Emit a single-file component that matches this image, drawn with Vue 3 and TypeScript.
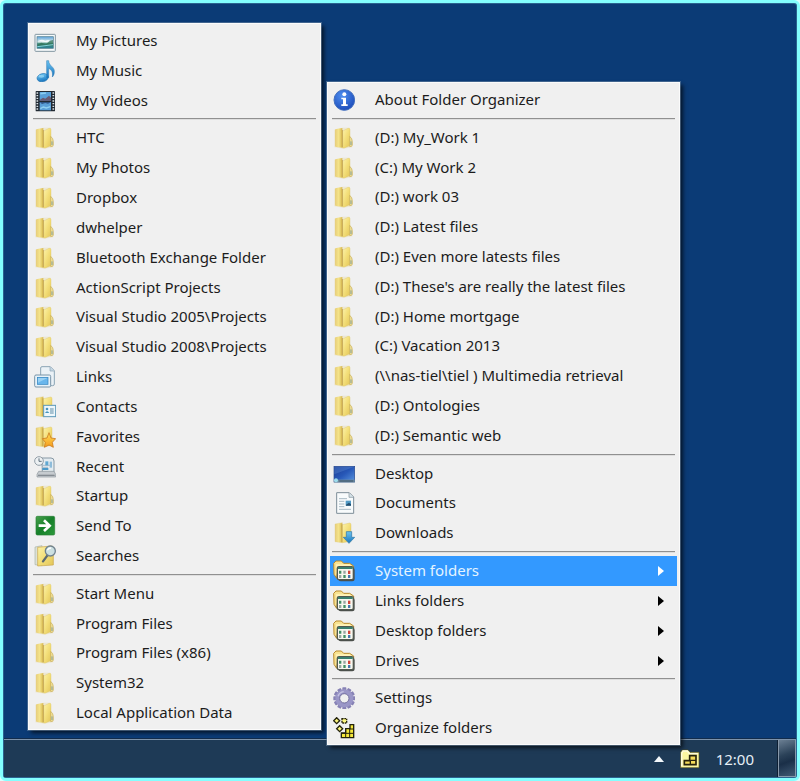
<script setup lang="ts">
interface MenuEntry {
  label: string
  icon: string
  submenu?: boolean
  active?: boolean
}

const folder = (label: string): MenuEntry => ({ label, icon: 'folder' })
const group = (label: string, active = false): MenuEntry => ({ label, icon: 'group', submenu: true, active })

const systemGroups: MenuEntry[][] = [
  [
    { label: 'My Pictures', icon: 'pictures' },
    { label: 'My Music', icon: 'music' },
    { label: 'My Videos', icon: 'videos' },
  ],
  [
    folder('HTC'),
    folder('My Photos'),
    folder('Dropbox'),
    folder('dwhelper'),
    folder('Bluetooth Exchange Folder'),
    folder('ActionScript Projects'),
    folder('Visual Studio 2005\\Projects'),
    folder('Visual Studio 2008\\Projects'),
    { label: 'Links', icon: 'links' },
    { label: 'Contacts', icon: 'contacts' },
    { label: 'Favorites', icon: 'favorites' },
    { label: 'Recent', icon: 'recent' },
    folder('Startup'),
    { label: 'Send To', icon: 'sendto' },
    { label: 'Searches', icon: 'searches' },
  ],
  [
    folder('Start Menu'),
    folder('Program Files'),
    folder('Program Files (x86)'),
    folder('System32'),
    folder('Local Application Data'),
  ],
]

const mainGroups: MenuEntry[][] = [
  [{ label: 'About Folder Organizer', icon: 'about' }],
  [
    folder('(D:) My_Work 1'),
    folder('(C:) My Work 2'),
    folder('(D:) work 03'),
    folder('(D:) Latest files'),
    folder('(D:) Even more latests files'),
    folder("(D:) These's are really the latest files"),
    folder('(D:) Home mortgage'),
    folder('(C:) Vacation 2013'),
    folder('(\\\\nas-tiel\\tiel ) Multimedia retrieval'),
    folder('(D:) Ontologies'),
    folder('(D:) Semantic web'),
  ],
  [
    { label: 'Desktop', icon: 'desktop' },
    { label: 'Documents', icon: 'documents' },
    { label: 'Downloads', icon: 'downloads' },
  ],
  [group('System folders', true), group('Links folders'), group('Desktop folders'), group('Drives')],
  [
    { label: 'Settings', icon: 'settings' },
    { label: 'Organize folders', icon: 'organize' },
  ],
]

const menus = [
  { name: 'system', label: 'System folders', groups: systemGroups },
  { name: 'main', label: 'Folder Organizer', groups: mainGroups },
]

const teeth: number[] = Array.from({ length: 12 }, (_, i) => i * 30)
</script>

<template>
  <div class="screen">
    <svg class="sprites" aria-hidden="true">
      <defs>
        <linearGradient id="g-flap" x1="0" x2="1" y1="0" y2="1">
          <stop offset="0" stop-color="#fcf3ab" />
          <stop offset="0.5" stop-color="#f3de78" />
          <stop offset="1" stop-color="#e2c558" />
        </linearGradient>
        <linearGradient id="g-back" x1="0" x2="1" y1="0" y2="0">
          <stop offset="0" stop-color="#e6cd7c" />
          <stop offset="0.5" stop-color="#f5e48a" />
          <stop offset="1" stop-color="#d6b74e" />
        </linearGradient>
        <linearGradient id="g-blue" x1="0" x2="0" y1="0" y2="1">
          <stop offset="0" stop-color="#6cc4f2" />
          <stop offset="1" stop-color="#1673bd" />
        </linearGradient>
        <linearGradient id="g-picture" x1="0" x2="0" y1="0" y2="1">
          <stop offset="0" stop-color="#5b9fd6" />
          <stop offset="0.45" stop-color="#dff0ee" />
          <stop offset="0.6" stop-color="#3f8b7a" />
          <stop offset="1" stop-color="#2b7f94" />
        </linearGradient>
        <linearGradient id="g-screen" x1="0" x2="1" y1="0" y2="1">
          <stop offset="0" stop-color="#1d3c94" />
          <stop offset="0.5" stop-color="#2758b8" />
          <stop offset="1" stop-color="#5c97e0" />
        </linearGradient>
        <linearGradient id="g-green" x1="0" x2="1" y1="0" y2="1">
          <stop offset="0" stop-color="#49a24c" />
          <stop offset="0.5" stop-color="#16802a" />
          <stop offset="1" stop-color="#2c9a3b" />
        </linearGradient>
        <linearGradient id="g-star" x1="0" x2="0" y1="0" y2="1">
          <stop offset="0" stop-color="#ffdf58" />
          <stop offset="1" stop-color="#f59a1c" />
        </linearGradient>
        <radialGradient id="g-info" cx="0.4" cy="0.3" r="0.75">
          <stop offset="0" stop-color="#4f8ff0" />
          <stop offset="1" stop-color="#1a49b8" />
        </radialGradient>
      </defs>

      <symbol id="folder" viewBox="0 0 66 66">
        <path d="M4 8 L28 2 H50 V42 L58 48 V61 L30 65 L4 61Z" fill="#e8dcae" opacity="0.45" />
        <path d="M6 10 Q6 6 10 6 L28 3 V62 L10 60 Q6 60 6 56Z" fill="url(#g-back)" />
        <path d="M31 11 L45 4 Q51 3 51 8 V56 L34 63 H29 V12Z" fill="url(#g-flap)" stroke="#dcc263" stroke-width="1" />
        <path d="M28 9 V61" stroke="#b8933a" stroke-width="3" opacity="0.7" />
        <path d="M50 28 Q58 34 58 44 V54 Q58 59 50 59Z" fill="#efe09a" stroke="#c9ae58" stroke-width="2" />
        <path d="M54 43 V54" stroke="#829d96" stroke-width="3" />
      </symbol>

      <symbol id="pictures" viewBox="0 0 66 66">
        <rect x="3" y="13" width="61" height="51" rx="2" fill="#f7fbfc" stroke="#8196a1" stroke-width="3" />
        <rect x="9" y="20" width="49" height="35" fill="url(#g-picture)" stroke="#57808f" stroke-width="2" />
        <path d="M10 44 L22 38 L36 43 L48 32 L57 30 V48 H10Z" fill="#33745a" opacity="0.75" />
        <path d="M14 33 Q22 26 34 32 Q42 29 48 31 L38 37Z" fill="#fff" opacity="0.8" />
        <path d="M10 50 L57 44" stroke="#84d4dc" stroke-width="3" />
      </symbol>

      <symbol id="music" viewBox="0 0 66 66">
        <ellipse cx="26" cy="53" rx="17" ry="12" transform="rotate(-14 26 53)" fill="url(#g-blue)" stroke="#2477b3" stroke-width="2" />
        <path d="M38 2 H44 C44 18 62 20 61 35 C61 44 57 48 55 51 C57 38 54 30 44 25 V53 H38Z" fill="url(#g-blue)" stroke="#2477b3" stroke-width="1.5" />
        <ellipse cx="22" cy="49" rx="9" ry="4" fill="#a5def7" opacity="0.65" />
      </symbol>

      <symbol id="videos" viewBox="0 0 66 66">
        <rect x="5" y="3" width="58" height="61" rx="2" fill="#222a33" />
        <path d="M10 7 V62 M58 7 V62" stroke="#dce4e8" stroke-width="5" stroke-dasharray="4 4" />
        <rect x="17" y="6" width="34" height="26" fill="#5a9fd8" />
        <rect x="17" y="36" width="34" height="25" fill="#5a9fd8" />
        <path d="M17 30 L27 23 L34 26 L45 17 L51 23 V32 H17Z" fill="#6a5a72" />
        <path d="M17 36 H51 L42 41 L34 39 L24 42Z" fill="#2f5484" />
        <path d="M19 56 L28 51 L37 54 L49 50" stroke="#8fd0f2" stroke-width="4" fill="none" />
        <path d="M19 11 L36 9" stroke="#8bcff2" stroke-width="5" />
      </symbol>

      <symbol id="links" viewBox="0 0 66 66">
        <path d="M20 6 Q20 2 24 2 H49 L61 14 V54 Q61 59 56 59 H20Z" fill="#eaf1f6" stroke="#8ba4b5" stroke-width="3" />
        <path d="M48 3 V15 H60" fill="#c4d7e3" stroke="#8ba4b5" stroke-width="2" />
        <rect x="2" y="27" width="48" height="36" rx="4" fill="#e7f2f9" stroke="#7894a8" stroke-width="3" />
        <rect x="10" y="34" width="32" height="21" fill="#69b6ec" stroke="#2e81bd" stroke-width="2" />
        <path d="M12 36 H40 L12 50Z" fill="#b2e1fb" opacity="0.65" />
      </symbol>

      <symbol id="openfolder" viewBox="0 0 66 66">
        <path d="M6 6 L28 2 V62 L6 59Z" fill="url(#g-back)" stroke="#e0ca7c" stroke-width="1" />
        <path d="M28 8 L50 3 Q54 3 54 8 V58 L28 62Z" fill="url(#g-flap)" stroke="#d6ba58" stroke-width="1" />
        <path d="M27 7 V60" stroke="#b8933a" stroke-width="3" opacity="0.65" />
      </symbol>

      <symbol id="contacts" viewBox="0 0 66 66">
        <use href="#openfolder" />
        <rect x="29" y="28" width="36" height="34" fill="#edf7fb" stroke="#5b99b9" stroke-width="3" />
        <circle cx="39" cy="39" r="4" fill="#4594c0" />
        <path d="M33 51 Q39 40 46 51Z" fill="#4594c0" />
        <path d="M48 39 H59 M48 45 H59 M48 51 H59" stroke="#5f8ca6" stroke-width="3" />
      </symbol>

      <symbol id="favorites" viewBox="0 0 66 66">
        <use href="#openfolder" />
        <path d="M45 20 L51 36 L65 38 L55 49 L58 64 L45 57 L31 64 L34 49 L25 38 L39 36Z" fill="url(#g-star)" stroke="#cd7d22" stroke-width="2.5" stroke-linejoin="round" />
      </symbol>

      <symbol id="recent" viewBox="0 0 66 66">
        <path d="M24 6 H51 Q60 6 60 15 V49 H25Z" fill="#e3ebf0" stroke="#8798a4" stroke-width="3" />
        <path d="M22 28 H49 M24 34 H42" stroke="#a5bac8" stroke-width="3" />
        <path d="M14 46 H60 L65 55 V63 H9 V55Z" fill="#c6cbcf" stroke="#8d959b" stroke-width="2" />
        <path d="M12 58 H62" stroke="#858c92" stroke-width="4" />
        <rect x="34" y="16" width="9" height="12" fill="#5fa7d2" />
        <rect x="47" y="17" width="7" height="18" fill="#8ebcda" />
        <rect x="25" y="36" width="18" height="6" fill="#4b9aca" />
        <circle cx="15" cy="15" r="13" fill="#edf1f3" stroke="#929ea7" stroke-width="3" />
        <path d="M15 7 V16 H23" fill="none" stroke="#60717d" stroke-width="3" />
      </symbol>

      <symbol id="sendto" viewBox="0 0 66 66">
        <rect x="6" y="4" width="56" height="56" rx="4" fill="url(#g-green)" stroke="#247c32" stroke-width="2" />
        <path d="M14 32 H46 M30 16 L47 32 L30 48" fill="none" stroke="#fff" stroke-width="8" />
      </symbol>

      <symbol id="searches" viewBox="0 0 66 66">
        <path d="M3 6 L24 2 V62 L3 59Z" fill="#dce1d7" stroke="#aab3a8" stroke-width="2" />
        <path d="M11 7 L52 3 Q58 3 58 8 V60 L11 63Z" fill="url(#g-flap)" stroke="#c8a548" stroke-width="2" />
        <path d="M42 29 L27 49" stroke="#5e6a70" stroke-width="7" stroke-linecap="round" />
        <circle cx="49" cy="18" r="15" fill="#c9e1ed" fill-opacity="0.9" stroke="#71838e" stroke-width="4" />
        <path d="M40 16 Q43 9 51 9" fill="none" stroke="#fff" stroke-width="4" />
      </symbol>

      <symbol id="about" viewBox="0 0 66 66">
        <circle cx="34" cy="33" r="31" fill="url(#g-info)" stroke="#426fbe" stroke-width="3" />
        <circle cx="34" cy="16" r="6" fill="#fff" />
        <path d="M25 26 H39 V46 H44 V51 H25 V46 H30 V31 H25Z" fill="#fff" />
      </symbol>

      <symbol id="desktop" viewBox="0 0 66 66">
        <rect x="3" y="10" width="62" height="47" fill="url(#g-screen)" stroke="#26488e" stroke-width="2" />
        <path d="M4 11 H64 L4 34Z" fill="#6092d8" opacity="0.35" />
        <rect x="3" y="50" width="62" height="8" fill="#6f8c9d" />
        <circle cx="9" cy="52" r="6" fill="#9ddced" />
        <path d="M19 54 H61" stroke="#354d69" stroke-width="3" />
      </symbol>

      <symbol id="documents" viewBox="0 0 66 66">
        <path d="M11 2 H49 L62 15 V64 H11Z" fill="#f8fbfc" stroke="#7e8e98" stroke-width="3" stroke-linejoin="round" />
        <path d="M48 3 V16 H61" fill="#d5e2e9" stroke="#7e8e98" stroke-width="2" />
        <path d="M18 20 H42 M18 28 H34 M18 36 H34 M18 44 H34 M18 52 H54" stroke="#a9bac4" stroke-width="3" />
        <rect x="38" y="26" width="16" height="15" fill="#519ac5" />
        <path d="M39 38 L48 32 L54 37 V41 H39Z" fill="#244f70" />
      </symbol>

      <symbol id="downloads" viewBox="0 0 66 66">
        <use href="#openfolder" />
        <path d="M40 29 H56 V46 H65 L48 64 L31 46 H40Z" fill="url(#g-blue)" stroke="#3c83b0" stroke-width="2.5" stroke-linejoin="round" />
      </symbol>

      <symbol id="group" viewBox="0 0 66 66">
        <path d="M11 55 L3 43 L2 10 L9 3 H25 L32 10 H50 L62 18 V27 H15Z" fill="#f8e291" stroke="#b88a2c" stroke-width="3" stroke-linejoin="round" />
        <path d="M9 13 H50 L58 20 H18 L12 42Z" fill="#fff3b8" />
        <rect x="16" y="23" width="49" height="41" rx="7" fill="#4a4e4a" />
        <rect x="13" y="20" width="48" height="39" rx="5" fill="#f7f8ef" stroke="#515950" stroke-width="4" />
        <path d="M15 24 H59" stroke="#3a7f6e" stroke-width="6" />
        <path d="M18 32 H25 V41 H18Z M31 45 H38 V54 H31Z" fill="#3f8f63" />
        <path d="M31 32 H38 V41 H31Z M18 45 H25 V54 H18Z" fill="#98a5a2" />
        <path d="M45 32 H52 V42 H45Z" fill="#d04438" />
        <path d="M45 45 H52 V54 H45Z" fill="#4778ae" />
      </symbol>

      <symbol id="settings" viewBox="0 0 66 66">
        <rect
          v-for="angle in teeth"
          :key="angle"
          x="28"
          y="1"
          width="12"
          height="14"
          rx="2"
          fill="#8782b5"
          :transform="`rotate(${angle} 34 34)`"
        />
        <circle cx="34" cy="34" r="20" fill="none" stroke="#9a96c7" stroke-width="14" />
        <circle cx="34" cy="34" r="14" fill="#f0f0f0" stroke="#716d9e" stroke-width="3" />
        <path d="M15 28 Q19 16 32 14" fill="none" stroke="#c7c4e4" stroke-width="4" />
      </symbol>

      <symbol id="organize" viewBox="0 0 66 66">
        <g fill="#fcf77d" stroke="#24230c" stroke-width="4">
          <path d="M11 2 L20 11 L11 20 L2 11Z" />
          <path d="M20 26 L29 35 L20 44 L11 35Z" />
          <rect x="27" y="5" width="14" height="13" stroke-dasharray="5 2" />
          <path d="M25 62 V48 H38 V35 H51 V23 H62 V62Z" fill="#f5e83b" />
          <path d="M25 49 H62 M38 36 V62 M50 35 V62 M50 36 H62" fill="none" stroke-width="3" />
        </g>
      </symbol>

      <symbol id="tray-folder" viewBox="0 0 60 60">
        <path d="M2 54 V10 L7 3 H24 L30 10 H57 V56 H2Z" fill="#fbf7a0" stroke="#55521c" stroke-width="2" />
        <path d="M5 52 V13 L9 6 H22 L28 14 H53" fill="none" stroke="#fffde0" stroke-width="4" />
        <path d="M13 47 V35 H29 V20 H48 V47Z" fill="#f4dc58" stroke="#27230c" stroke-width="5" />
        <path d="M31 34 V47 M31 34 H48" stroke="#27230c" stroke-width="4" />
      </symbol>
    </svg>

    <footer class="taskbar">
      <button class="tray-button" type="button" aria-label="Show hidden icons">
        <svg class="chevron" viewBox="0 0 10 6"><path d="M0 6 L5 0 L10 6Z" fill="#f4f8fb" /></svg>
      </button>
      <button class="tray-button" type="button" aria-label="Folder Organizer">
        <svg class="tray-icon"><use href="#tray-folder" /></svg>
      </button>
      <time class="clock">12:00</time>
      <button class="show-desktop" type="button" aria-label="Show desktop"></button>
    </footer>

    <nav v-for="menu in menus" :key="menu.name" class="menu" :class="menu.name" role="menu" :aria-label="menu.label">
      <template v-for="(entries, index) in menu.groups" :key="index">
        <div v-if="index > 0" class="separator" role="separator"></div>
        <button
          v-for="entry in entries"
          :key="entry.label"
          class="item"
          :class="{ active: entry.active }"
          type="button"
          role="menuitem"
          :aria-haspopup="entry.submenu ? 'menu' : undefined"
        >
          <svg class="icon" aria-hidden="true"><use :href="'#' + entry.icon" /></svg>
          <span class="label">{{ entry.label }}</span>
          <svg v-if="entry.submenu" class="arrow" viewBox="0 0 6 10" aria-hidden="true">
            <path d="M0 0 L6 5 L0 10Z" fill="currentColor" />
          </svg>
        </button>
      </template>
    </nav>
  </div>
</template>

<style>
body {
  margin: 0;
  background: #d8ffff;
}
</style>

<style scoped>
.screen {
  position: relative;
  display: flex;
  flex-direction: column;
  justify-content: flex-end;
  box-sizing: border-box;
  height: 100vh;
  min-height: 720px;
  border: 3px solid #83ffff;
  border-radius: 6px;
  background: #0b3b76;
  box-shadow: inset 0 0 0 1px #2b6390;
  font-family: "Noto Sans", "Open Sans", sans-serif;
  font-size: 15px;
}

.sprites {
  position: absolute;
  width: 0;
  height: 0;
}

.menu {
  position: absolute;
  display: flex;
  flex-direction: column;
  box-sizing: border-box;
  padding: 2px 2px 1px;
  border: 1px solid #fbfbfb;
  background: #f0f0f0;
  box-shadow: 0 0 0 1px rgba(120, 145, 172, 0.5), 3px 3px 4px rgba(0, 0, 0, 0.65);
}

.system {
  top: 20px;
  bottom: 48px;
  left: 25px;
  width: 293px;
}

.main {
  top: 79px;
  bottom: 33px;
  left: 324px;
  width: 353px;
}

.item {
  display: flex;
  flex: 1 1 0;
  align-items: center;
  min-height: 0;
  padding: 0 13px 0 3px;
  border: 0;
  background: none;
  color: #1c1c1c;
  font: inherit;
  line-height: 20px;
  text-align: left;
}

.item.active {
  background: #3399ff;
  color: #e4f4ff;
}

.icon {
  flex: none;
  width: 22px;
  height: 22px;
  margin-right: 20px;
}

.label {
  flex: 1;
  padding-bottom: 2px;
  white-space: nowrap;
}

.arrow {
  width: 6px;
  height: 10px;
  color: #000;
}

.active .arrow {
  color: #fff;
}

.separator {
  flex: none;
  box-sizing: border-box;
  height: 8px;
  margin: 0 2px;
  border-top: 3px solid transparent;
  border-bottom: 3px solid transparent;
  background: linear-gradient(#909090 50%, #dedede 50%) padding-box;
}

.taskbar {
  display: flex;
  align-items: center;
  justify-content: flex-end;
  box-sizing: border-box;
  height: 38px;
  margin: 0 1px 1px;
  border-top: 1px solid #7d93ab;
  background: #1e3a56;
  box-shadow: 0 -1px 0 #122c4c;
}

.tray-button {
  display: flex;
  align-items: center;
  margin-right: 16px;
  padding: 0;
  border: 0;
  background: none;
}

.chevron {
  width: 10px;
  height: 6px;
}

.tray-icon {
  width: 20px;
  height: 20px;
}

.clock {
  margin-right: 24px;
  color: #e6eff7;
  line-height: 20px;
}

.show-desktop {
  align-self: stretch;
  width: 18px;
  padding: 0;
  border: 1px solid #8798aa;
  border-top: 0;
  background: linear-gradient(160deg, #6b7f93, #2b4259 40%, #1a2f48 60%, #405a74);
  box-shadow: -1px 0 0 #0d1f33;
}
</style>
